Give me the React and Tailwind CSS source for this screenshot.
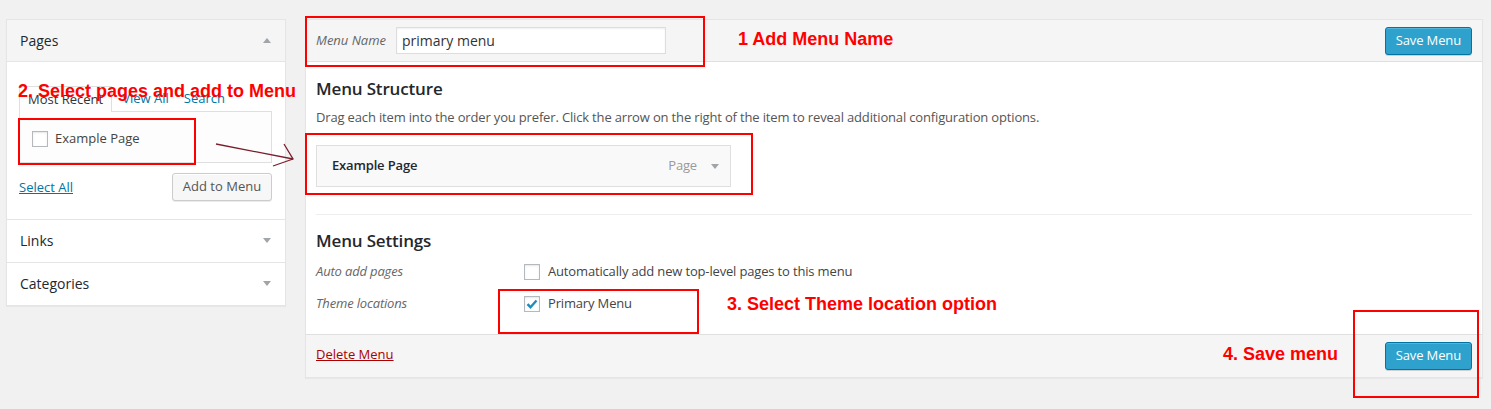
import React from 'react';

const Triangle = ({ up }) => (
    <svg width="8" height="5" viewBox="0 0 8 5" className="shrink-0">
        <polygon points={up ? '0,5 8,5 4,0' : '0,0 8,0 4,5'} fill="#a0a5aa" />
    </svg>
);

const Checkbox = ({ checked }) => (
    <span className="w-4 h-4 border border-[#b4b9be] bg-white shadow-[inset_0_1px_2px_rgba(0,0,0,0.1)] flex items-center justify-center shrink-0">
        {checked && (
            <svg width="14" height="14" viewBox="0 0 14 14">
                <path d="M2.5 7.2l3 3 6-6.7" fill="none" stroke="#1e8cbe" strokeWidth="2.4" />
            </svg>
        )}
    </span>
);

const SaveButton = () => (
    <button className="h-[28px] px-[10px] rounded-[3px] bg-[#2ea2cc] border border-[#0074a2] text-white text-[13px] tracking-[-0.01em] shadow-[inset_0_1px_0_rgba(120,200,230,0.5),0_1px_0_rgba(0,0,0,0.15)]">
        Save Menu
    </button>
);

// red annotation overlays drawn over the screenshot
const RedBox = ({ className }) => (
    <div className={`absolute border-2 border-[#ff0000] pointer-events-none ${className}`}></div>
);

const Note = ({ className, children }) => (
    <div className={`absolute text-[18px] leading-[18px] font-bold text-[#ff0000] whitespace-nowrap font-['Liberation_Sans',Arial,sans-serif] ${className}`}>
        {children}
    </div>
);

function PagesBox() {
    return (
        <div className="w-[280px] shrink-0 bg-white border border-[#e5e5e5] shadow-[0_1px_1px_rgba(0,0,0,0.04)]">
            <div className="h-[42px] bg-[#f5f5f5] border-b border-[#e5e5e5] flex items-center justify-between pl-[13px] pr-[14px]">
                <span className="text-[14px] text-[#23282d]">Pages</span>
                <Triangle up />
            </div>
            <div className="pt-[24px] pl-[12px] pr-[13px] pb-[18px] border-b border-[#e5e5e5]">
                <div className="flex items-end h-[25px] text-[13px]">
                    <div className="h-[26px] -mb-px relative px-[8px] border border-b-0 border-[#dfdfdf] bg-[#fdfdfd] flex items-center text-[#333]">
                        Most Recent
                    </div>
                    <span className="ml-[10px] h-[25px] flex items-center text-[#0074a2]">View All</span>
                    <span className="ml-[15px] h-[25px] flex items-center text-[#0074a2]">Search</span>
                </div>
                <div className="h-[52px] border border-[#dfdfdf] bg-[#fdfdfd] flex items-center pl-[12px] pt-[3px]">
                    <Checkbox />
                    <span className="ml-[7px] text-[13px] text-[#444]">Example Page</span>
                </div>
                <div className="mt-[10px] flex items-center justify-between">
                    <span className="text-[13px] text-[#0074a2] underline pt-px">Select All</span>
                    <button className="w-[100px] h-[28px] rounded-[3px] bg-[#f7f7f7] border border-[#cccccc] text-[13px] text-[#555] shadow-[inset_0_1px_0_#fff,0_1px_0_rgba(0,0,0,0.08)]">
                        Add to Menu
                    </button>
                </div>
            </div>
            <div className="h-[43px] border-b border-[#e5e5e5] flex items-center justify-between pl-[13px] pr-[14px] pb-px">
                <span className="text-[14px] text-[#23282d]">Links</span>
                <Triangle />
            </div>
            <div className="h-[42px] flex items-center justify-between pl-[13px] pr-[14px] pb-px">
                <span className="text-[14px] text-[#23282d]">Categories</span>
                <Triangle />
            </div>
        </div>
    );
}

function MenuEditor() {
    return (
        <div className="w-[1178px] shrink-0 bg-white border border-[#e5e5e5] shadow-[0_1px_1px_rgba(0,0,0,0.04)]">
            <div className="h-[42px] bg-[#f5f5f5] border-b border-[#dfdfdf] flex items-center justify-between px-[10px]">
                <div className="flex items-center">
                    <span className="w-[80px] text-[13px] italic text-[#666]">Menu Name</span>
                    <div className="w-[270px] h-[27px] bg-white border border-[#ddd] shadow-[inset_0_1px_2px_rgba(0,0,0,0.07)] flex items-center px-[5px] text-[14px] text-[#333]">
                        primary menu
                    </div>
                </div>
                <SaveButton />
            </div>

            <div className="px-[10px] pt-[15px] pb-[20px] tracking-[-0.01em]">
                <h3 className="h-[24px] leading-[24px] text-[17px] font-semibold text-[#23282d]">Menu Structure</h3>
                <p className="mt-[6px] leading-[20px] text-[13px] text-[#555]">
                    Drag each item into the order you prefer. Click the arrow on the right of the item to reveal additional configuration options.
                </p>
                <div className="mt-[18px] w-[415px] h-[42px] bg-[#f9f9f9] border border-[#dfdfdf] flex items-center justify-between pl-[15px] pr-[11px]">
                    <span className="text-[13px] font-semibold text-[#23282d]">Example Page</span>
                    <div className="flex items-center">
                        <span className="text-[13px] text-[#999]">Page</span>
                        <span className="ml-[14px]"><Triangle /></span>
                    </div>
                </div>
                <div className="mt-[27px] h-px bg-[#eee]"></div>
                <h3 className="mt-[14px] h-[24px] leading-[24px] text-[17px] font-semibold text-[#23282d]">Menu Settings</h3>
                <div className="mt-[9px] h-[20px] flex items-center text-[13px]">
                    <span className="w-[208px] italic text-[#666]">Auto add pages</span>
                    <Checkbox />
                    <span className="ml-[8px] text-[#444]">Automatically add new top-level pages to this menu</span>
                </div>
                <div className="mt-[12px] h-[20px] flex items-center text-[13px]">
                    <span className="w-[208px] italic text-[#666]">Theme locations</span>
                    <Checkbox checked />
                    <span className="ml-[8px] text-[#444]">Primary Menu</span>
                </div>
            </div>

            <div className="h-[43px] bg-[#f5f5f5] border-t border-[#dfdfdf] flex items-center justify-between px-[10px]">
                <span className="text-[13px] text-[#a00] underline mb-[3px]">Delete Menu</span>
                <SaveButton />
            </div>
        </div>
    );
}

export default function App() {
    return (
        <div className="relative w-[1491px] h-[409px] overflow-hidden bg-[#f1f1f1] font-['Open_Sans',sans-serif]">
            <div className="flex items-start gap-[19px] pt-[19px] pl-[6px]">
                <PagesBox />
                <MenuEditor />
            </div>

            <RedBox className="left-[305px] top-[16px] w-[400px] h-[51px]" />
            <RedBox className="left-[18px] top-[118px] w-[178px] h-[47px]" />
            <RedBox className="left-[305px] top-[133px] w-[448px] h-[62px]" />
            <RedBox className="left-[498px] top-[289px] w-[201px] h-[45px]" />
            <RedBox className="left-[1353px] top-[310px] w-[126px] h-[88px]" />

            <Note className="left-[18px] top-[82px]">2. Select pages and add to Menu</Note>
            <Note className="left-[738px] top-[30px]">1 Add Menu Name</Note>
            <Note className="left-[727px] top-[295px]">3. Select Theme location option</Note>
            <Note className="left-[1223px] top-[345px]">4. Save menu</Note>

            <svg className="absolute left-[210px] top-[138px]" width="90" height="32" viewBox="0 0 90 32">
                <g fill="none" stroke="#7a1f2b" strokeWidth="1.3">
                    <path d="M6 6L83 21" />
                    <path d="M74 6L83 21L63 28" />
                </g>
            </svg>
        </div>
    );
}
